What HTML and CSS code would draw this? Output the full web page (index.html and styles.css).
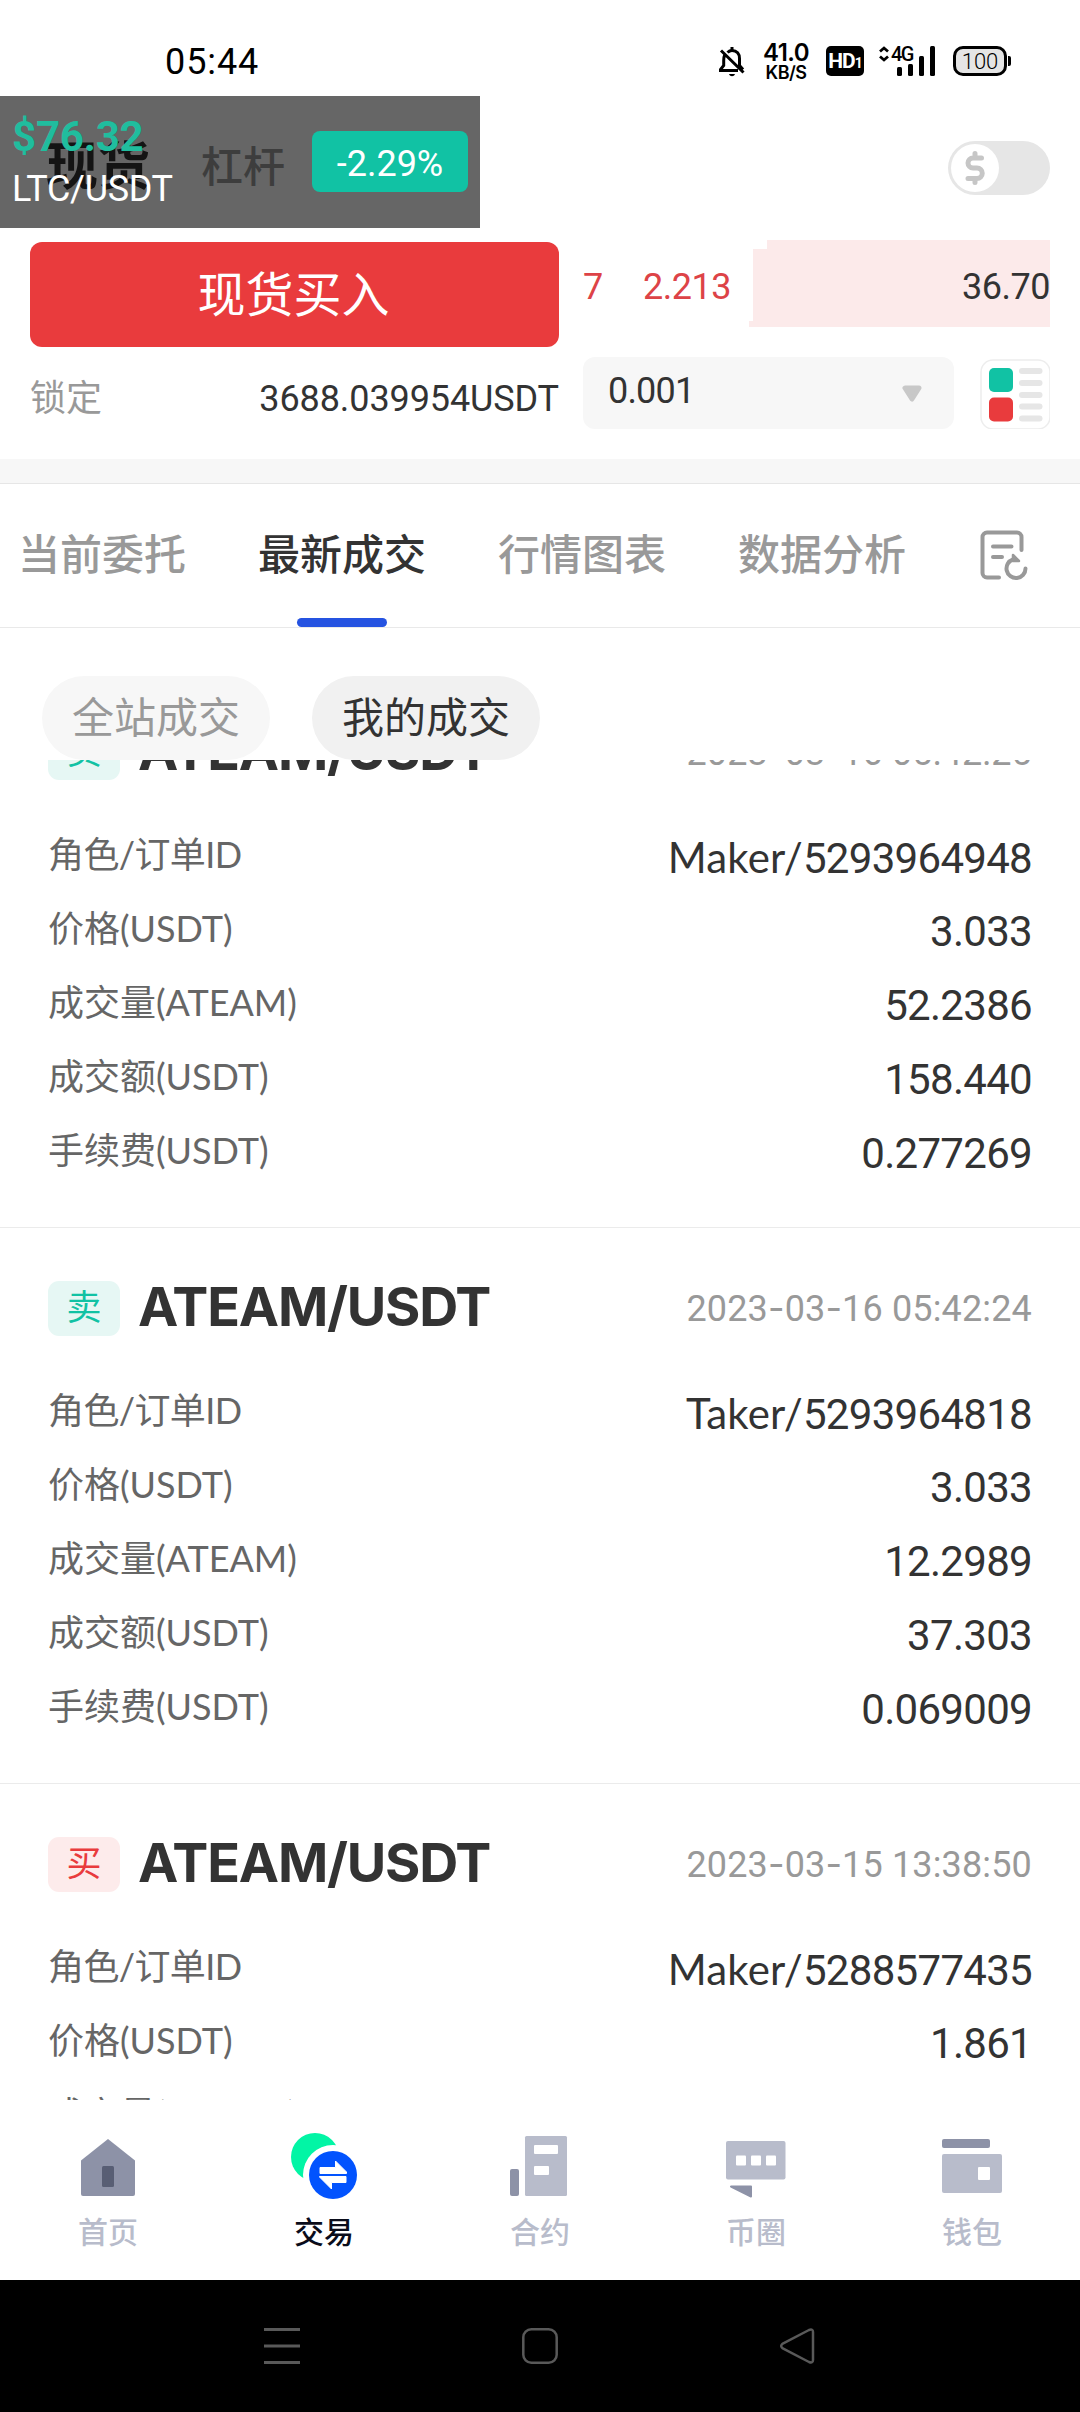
FILE: index.html
```html
<!DOCTYPE html>
<html lang="zh-CN">
<head>
<meta charset="utf-8">
<title>现货交易</title>
<link rel="stylesheet" href="styles.css">
</head>
<body>
<div class="screen">
  <div class="statusbar">
    <span class="clock">05:44</span>
    <div class="status-icons">
      <svg class="bell" width="26" height="32" viewBox="0 0 26 32" fill="none" stroke="#000" stroke-width="3"><path d="M8.5 6.5C10 5 11.500 4.500 13 4.500c5 0 7.500 3.500 7.500 8v7l3.500 4M5.500 9.500c-.7 1.500-.8 3-.8 5v5L1.500 23.500v1H19M2 4.500l22.500 22"/><path d="M13 1v3"/><path d="M10 28h6c-1 3-5 3-6 0z" fill="#000" stroke="none"/></svg>
      <div class="speed"><span class="speed-num">41.0</span><span class="speed-unit">KB/S</span></div>
      <div class="hd">HD<small>1</small></div>
      <div class="signal">
        <svg width="57" height="30" viewBox="0 0 57 30"><path d="M1 5.500 5 2l4 3.500M1 10.500 5 14l4-3.500" fill="none" stroke="#000" stroke-width="2.800"/><rect x="18" y="21" width="5" height="9" rx="1.500"/><rect x="29" y="18" width="5" height="12" rx="1.500"/><rect x="40" y="10" width="5" height="20" rx="1.500"/><rect x="51" y="0" width="5" height="30" rx="1.500"/></svg>
        <span class="net">4G</span>
      </div>
      <div class="battery">100</div><i class="battery-nub"></i>
    </div>
  </div>

  <header class="header">
    <span class="mode mode-on">现货</span>
    <span class="mode">杠杆</span>
    <div class="toggle"><div class="knob">
      <svg width="22" height="36" viewBox="0 0 22 36" fill="none" stroke="#c6c6c6" stroke-width="5" stroke-linecap="round" stroke-linejoin="round"><path d="M17.500 8H9a5 5 0 0 0 0 10h4a5.200 5.200 0 0 1 0 10.500H4M11 3.500V8M11 29v3.500"/></svg>
    </div></div>
    <div class="ticker">
      <div class="ticker-info"><b>$76.32</b><span>LTC/USDT</span></div>
      <div class="ticker-change">-2.29%</div>
    </div>
  </header>

  <section class="order">
    <div class="order-left">
      <div class="buy">现货买入</div>
      <div class="locked"><span>锁定</span><b>3688.039954USDT</b></div>
    </div>
    <div class="order-right">
      <div class="depth">
        <span class="ask-a">7</span><span class="ask-b">2.213</span>
        <div class="depth-bar"><i class="d1"></i><i class="d2"></i><i class="d3"></i><span>36.70</span></div>
      </div>
      <div class="tools">
        <div class="select"><span>0.001</span><svg width="22" height="18" viewBox="0 0 22 18"><path d="M4 3h14l-7 11z" fill="#c8c8c8" stroke="#c8c8c8" stroke-width="5" stroke-linejoin="round"/></svg></div>
        <svg width="70" height="72" viewBox="0 -2 70 72"><rect x="1" y="1" width="69" height="69" rx="12" fill="#fff" stroke="#ededed" stroke-width="1.500"/><rect x="9" y="9" width="24" height="24" rx="5" fill="#11c2a4"/><rect x="9" y="38.500" width="24" height="24" rx="5" fill="#e93b3d"/><g fill="#e6e6e6"><rect x="39" y="9" width="23.500" height="6" rx="3"/><rect x="39" y="21" width="23.500" height="6" rx="3"/><rect x="39" y="33" width="23.500" height="6" rx="3"/><rect x="39" y="44.500" width="23.500" height="6" rx="3"/><rect x="39" y="56.500" width="23.500" height="6" rx="3"/></g></svg>
      </div>
    </div>
  </section>
  <div class="divider"></div>

  <nav class="tabs">
    <span class="tab">当前委托</span>
    <span class="tab tab-on">最新成交</span>
    <span class="tab">行情图表</span>
    <span class="tab">数据分析</span>
    <svg class="history" width="48" height="52" viewBox="0 0 48 52" fill="none" stroke="#999" stroke-width="4" stroke-linecap="round" stroke-linejoin="round"><path d="M41.500 20V7a4.500 4.500 0 0 0-4.500-4.500H7A4.500 4.500 0 0 0 2.500 7v36A4.500 4.500 0 0 0 7 47.500h12M13 16.500h18.500M13 27h9"/><path d="M33 29.500a9.500 9.500 0 1 0 12.500 9"/><path d="M33 25v6h6z" fill="#999" stroke-width="2.500"/></svg>
  </nav>

  <div class="filters">
    <span class="pill">全站成交</span>
    <span class="pill pill-on">我的成交</span>
  </div>

  <main class="list">
    <article class="trade">
      <div class="trade-head"><span class="side sell">卖</span><h2>ATEAM/USDT</h2><time>2023<i>-</i>03<i>-</i>16 05:42:25</time></div>
      <dl>
        <div><dt class="role">角色/订单ID</dt><dd><span>Maker/</span>5293964948</dd></div>
        <div><dt>价格(USDT)</dt><dd>3.033</dd></div>
        <div><dt>成交量(ATEAM)</dt><dd>52.2386</dd></div>
        <div><dt>成交额(USDT)</dt><dd>158.440</dd></div>
        <div><dt>手续费(USDT)</dt><dd>0.277269</dd></div>
      </dl>
    </article>
    <article class="trade">
      <div class="trade-head"><span class="side sell">卖</span><h2>ATEAM/USDT</h2><time>2023<i>-</i>03<i>-</i>16 05:42:24</time></div>
      <dl>
        <div><dt class="role">角色/订单ID</dt><dd><span>Taker/</span>5293964818</dd></div>
        <div><dt>价格(USDT)</dt><dd>3.033</dd></div>
        <div><dt>成交量(ATEAM)</dt><dd>12.2989</dd></div>
        <div><dt>成交额(USDT)</dt><dd>37.303</dd></div>
        <div><dt>手续费(USDT)</dt><dd>0.069009</dd></div>
      </dl>
    </article>
    <article class="trade">
      <div class="trade-head"><span class="side buyside">买</span><h2>ATEAM/USDT</h2><time>2023<i>-</i>03<i>-</i>15 13:38:50</time></div>
      <dl>
        <div><dt class="role">角色/订单ID</dt><dd><span>Maker/</span>5288577435</dd></div>
        <div><dt>价格(USDT)</dt><dd>1.861</dd></div>
        <div><dt>成交量(ATEAM)</dt><dd></dd></div>
      </dl>
    </article>
  </main>

  <nav class="bottom">
    <div class="item"><svg width="72" height="72" viewBox="0 0 72 72"><path d="M9 29.500 36 8l27 21.500V63a2 2 0 0 1-2 2H11a2 2 0 0 1-2-2z" fill="#8d92a7"/><rect x="30" y="35" width="12" height="21" rx="1.500" fill="#585e74"/></svg><span>首页</span></div>
    <div class="item item-on"><svg width="72" height="72" viewBox="0 0 72 72"><circle cx="27" cy="26" r="24" fill="#02f5a5"/><circle cx="45" cy="44" r="30" fill="#fff"/><circle cx="45" cy="44" r="24" fill="#0253fe"/><path d="M32 36.500h15.500V30l11 11v1.500H32zM58 45.500v6H43.500V58l-12-12v-.5z" fill="#fff" stroke="#fff" stroke-linejoin="round"/></svg><span>交易</span></div>
    <div class="item"><svg width="72" height="72" viewBox="0 0 72 72"><rect x="6" y="38" width="9" height="27" rx="2" fill="#8d92a7"/><rect x="21" y="5" width="42" height="60" rx="1.500" fill="#b8bccb"/><rect x="30" y="14" width="24" height="9" rx="1" fill="#fff"/><rect x="30" y="35" width="15" height="9" rx="1" fill="#fff"/></svg><span>合约</span></div>
    <div class="item"><svg width="72" height="72" viewBox="0 0 72 72"><rect x="6" y="10" width="59.500" height="38.500" rx="2" fill="#b8bccb"/><g fill="#fff"><rect x="16" y="24.500" width="10" height="10" rx="1"/><rect x="31" y="24.500" width="10" height="10" rx="1"/><rect x="46" y="24.500" width="10" height="10" rx="1"/></g><path d="M11 55.500h20v10z" fill="#8d92a7" stroke="#8d92a7" stroke-width="2" stroke-linejoin="round"/></svg><span>币圈</span></div>
    <div class="item"><svg width="72" height="72" viewBox="0 0 72 72"><rect x="6" y="8" width="48" height="9" rx="2" fill="#8d92a7"/><rect x="6" y="23" width="60" height="39" rx="2" fill="#b8bccb"/><rect x="42" y="36" width="12" height="13" rx="1" fill="#fff"/></svg><span>钱包</span></div>
  </nav>

  <div class="sysnav">
    <svg width="36" height="36" viewBox="0 0 36 36" fill="#595959"><rect width="36" height="3"/><rect y="16.500" width="36" height="3"/><rect y="33" width="36" height="3"/></svg>
    <svg width="36" height="36" viewBox="0 0 36 36" fill="none" stroke="#595959" stroke-width="2.500"><rect x="1.300" y="1.300" width="33.400" height="33.400" rx="8"/></svg>
    <svg width="36" height="36" viewBox="0 0 36 36" fill="none" stroke="#595959" stroke-width="2.500" stroke-linejoin="round"><path d="M2.800 15.600 29 2q4-1.500 4 2v28q0 3.500-4 2L2.800 20.400q-3.200-2.400 0-4.800z"/></svg>
  </div>
</div>
</body>
</html>
```

FILE: styles.css
```css
* { box-sizing: border-box; }
body { margin: 0; background: #fff; color: #333; font-family: Roboto, "Noto Sans CJK SC", sans-serif; }
h2, dl, dt, dd { margin: 0; }
svg { display: block; flex: none; }
.screen { width: 1080px; height: 2412px; display: flex; flex-direction: column; overflow: hidden; }
.screen > * { flex: none; }

/* status bar */
.statusbar { height: 96px; display: flex; justify-content: space-between; padding: 0 69px 0 165px; color: #000; }
.clock { font-size: 36px; line-height: 42px; letter-spacing: .9px; padding-top: 41px; }
.status-icons { display: flex; align-items: flex-start; padding-top: 46px; }
.speed { width: 50px; margin: -6px 0 0 16px; display: flex; flex-direction: column; align-items: center; font-family: Inter, sans-serif; font-weight: 600; }
.speed-num { font-size: 24px; line-height: 25px; letter-spacing: -.6px; }
.speed-unit { font-size: 18px; line-height: 16px; font-weight: 600; letter-spacing: -.5px; }
.hd { width: 38px; height: 30px; margin-left: 15px; border-radius: 5px; background: #000; color: #fff; font-size: 21px; line-height: 31px; font-weight: 700; text-align: center; letter-spacing: -1px; white-space: nowrap; }
.hd small { font-size: 14px; }
.signal { position: relative; width: 57px; margin-left: 15px; }
.net { position: absolute; left: 12px; top: -4px; font-size: 20px; line-height: 24px; font-weight: 500; letter-spacing: -1.500px; }
.battery { width: 54px; height: 30px; margin-left: 17px; border: 3px solid #000; border-radius: 10px; background: #e5e5e5; font-size: 22px; line-height: 25px; font-weight: 300; text-align: center; }
.battery-nub { width: 3px; height: 10px; margin: 10px 0 0 1px; background: #000; border-radius: 0 2px 2px 0; }

/* header */
.header { position: relative; height: 144px; display: flex; align-items: center; padding: 0 30px 0 46px; }
.mode { font-size: 42px; line-height: 60px; font-weight: 500; color: #999; margin-left: 51px; }
.mode-on { font-size: 52px; font-weight: 700; color: #333; margin-left: 0; }
.toggle { width: 102px; height: 54px; margin-left: auto; padding: 3px; border-radius: 27px; background: #e6e6e6; }
.knob { width: 48px; height: 48px; border-radius: 50%; background: #fff; display: flex; align-items: center; justify-content: center; }
.ticker { position: absolute; left: 0; top: 0; width: 480px; height: 132px; padding: 0 12px; background: rgba(0, 0, 0, .6); display: flex; align-items: center; justify-content: space-between; color: #fff; font-size: 36px; }
.ticker-info { display: flex; flex-direction: column; padding-top: 4px; }
.ticker-info b { font-size: 42px; line-height: 50px; letter-spacing: -.2px; color: #20bd9e; }
.ticker-info span { line-height: 54px; letter-spacing: -.3px; }
.ticker-change { width: 156px; height: 61px; margin-bottom: 1px; border-radius: 8px; background: #11c2a4; line-height: 66px; text-align: center; }

/* order panel */
.order { height: 219px; display: flex; gap: 24px; padding: 0 30px; font-size: 36px; }
.order-left { width: 529px; padding-top: 2px; }
.buy { height: 105px; padding-right: 2px; border-radius: 12px; background: #e93b3d; color: #fff; font-size: 48px; line-height: 107px; text-align: center; }
.locked { display: flex; justify-content: space-between; line-height: 42px; padding-top: 31px; white-space: nowrap; }
.locked span { color: #999; }
.locked b { font-weight: 400; letter-spacing: -.1px; }
.order-right { flex: 1; }
.depth { display: flex; height: 117px; line-height: 95px; }
.ask-a { width: 60px; color: #dd4347; }
.ask-b { width: 106px; color: #dd4347; letter-spacing: -.5px; }
.depth-bar { position: relative; flex: 1; height: 87px; text-align: right; letter-spacing: -.5px; }
.depth-bar i { position: absolute; right: 0; background: #fceaea; }
.d1 { top: 0; width: 283px; height: 9px; }
.d2 { top: 9px; width: 297px; height: 72px; }
.d3 { top: 81px; width: 301px; height: 6px; }
.depth-bar span { position: relative; }
.tools { display: flex; justify-content: space-between; }
.select { width: 371px; height: 72px; border-radius: 12px; background: #f7f7f7; display: flex; align-items: center; justify-content: space-between; padding: 2px 31px 0 25px; }
.select span { line-height: 42px; padding-bottom: 6px; letter-spacing: -.8px; }
.divider { height: 25px; background: #f7f7f7; border-bottom: 1px solid #e6e6e6; }

/* tabs */
.tabs { height: 144px; display: flex; gap: 72px; padding-left: 18px; border-bottom: 1px solid #e9e9e9; font-size: 42px; font-weight: 500; line-height: 60px; color: #999; }
.tab { display: flex; flex-direction: column; align-items: center; padding-top: 42px; white-space: nowrap; }
.tab-on { color: #333; }
.tab-on::after { content: ""; width: 90px; height: 9px; margin-top: 32px; border-radius: 5px; background: #2553e1; }
.history { margin: 46px 0 0 2px; }
.filters { height: 132px; display: flex; gap: 42px; padding: 48px 42px 0; }
.pill { width: 228px; height: 84px; border-radius: 42px; background: #f7f7f7; color: #999; font-size: 42px; line-height: 85px; text-align: center; }
.pill-on { background: #f1f1f1; color: #333; }

/* trades */
.list { height: 1340px; overflow: hidden; }
.trade { height: 556px; padding: 53px 48px 0 48px; border-bottom: 1px solid #ebebeb; }
.trade:first-child { margin-top: -88px; }
.trade-head { display: flex; align-items: center; height: 55px; }
.side { width: 72px; height: 55px; border-radius: 11px; font-size: 35px; line-height: 56px; text-align: center; }
.sell { background: #e6f7f4; color: #11c2a4; }
.buyside { background: #fdebeb; color: #e93b3d; }
.trade h2 { font: 700 54px/52px Inter, sans-serif; letter-spacing: -1.200px; margin-left: 18px; padding-bottom: 3px; }
.trade time { margin-left: auto; padding-bottom: 1px; font-size: 36px; letter-spacing: .15px; color: #999; }
.trade time i { font-family: Inter, sans-serif; font-style: normal; }
dl { padding-top: 36px; }
dl div { height: 74px; display: flex; justify-content: space-between; align-items: center; }
dt { font: 400 36px/52px Lato, "Noto Sans CJK SC", sans-serif; color: #666; padding-top: 1px; }
.role { letter-spacing: -.6px; }
dd { font-size: 42px; line-height: 52px; letter-spacing: -.7px; padding-top: 9px; }
dd span { font-family: Lato, sans-serif; letter-spacing: .2px; }

/* bottom navigation */
.bottom { height: 180px; display: flex; background: #fff; padding-top: 31px; }
.item { flex: 1; display: flex; flex-direction: column; align-items: center; font-size: 30px; line-height: 40px; font-weight: 500; color: #b8bccb; }
.item span { padding-top: 10px; }
.item-on { color: #0a0c1a; }
.sysnav { height: 132px; background: #000; display: flex; justify-content: space-between; align-items: center; padding: 0 264px; }
```
